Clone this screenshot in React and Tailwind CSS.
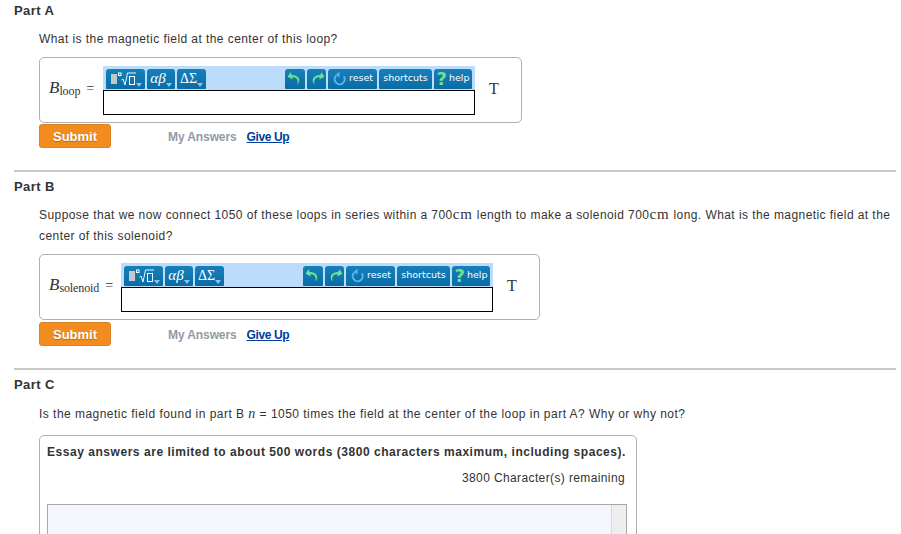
const btn =
    "flex items-center justify-center h-5 rounded-t-[3px] rounded-b-[1px] bg-gradient-to-b from-[#1580bb] to-[#0a6ca5] text-white";
const toolText = "font-['DejaVu_Sans',sans-serif] text-[9.5px] tracking-normal";

function Caret() {
    return (
        <svg width="6" height="4" viewBox="0 0 6 4" className="absolute right-[3px] bottom-[2px]">
            <path d="M0 0h6L3 4z" fill="#8fc4ea" />
        </svg>
    );
}

function Toolbar() {
    return (
        <div className="flex flex-col w-[372px]">
            <div className="flex justify-between h-[24px] pt-[3px] pl-[3px] pr-[3px] bg-[#bbdcfb]">
                <div className="flex gap-[2px]">
                    <div className={`${btn} relative w-[39px] !justify-start pl-[5px] gap-[1px]`}>
                        <span className="w-[6px] h-[10px] bg-[#c4c8cc]" />
                        <svg width="20" height="14" viewBox="0 0 20 14">
                            <rect x="0.5" y="1" width="2.5" height="2.5" fill="none" stroke="#fff" strokeWidth="1" />
                            <path d="M3.5 8l1.5-1 2 6 2.5-12H18" fill="none" stroke="#dff" strokeWidth="1" />
                            <rect x="11.5" y="4.5" width="5" height="8" fill="none" stroke="#fff" strokeWidth="1" />
                        </svg>
                        <Caret />
                    </div>
                    <div className={`${btn} relative w-[28px] pr-[6px] font-['Liberation_Serif',serif] italic text-[15px] tracking-normal text-[#d5e8f5]`}>
                        αβ
                        <Caret />
                    </div>
                    <div className={`${btn} relative w-[29px] pr-[6px] font-['Liberation_Serif',serif] text-[14px] tracking-normal text-[#c5dff0]`}>
                        ΔΣ
                        <Caret />
                    </div>
                </div>
                <div className="flex gap-[2px]">
                    <div className={`${btn} w-[20px]`}>
                        <svg width="16" height="16" viewBox="0 0 14 14">
                            <path d="M3 1L0.5 5 5 7.5 4.6 5.4c3.4-.2 5.4 1.5 4.6 6.6 3-4.4 1.6-8.4-5-8.6z" fill="#6ee08f" />
                        </svg>
                    </div>
                    <div className={`${btn} w-[19px]`}>
                        <svg width="16" height="16" viewBox="0 0 14 14">
                            <path d="M11 1l2.5 4L9 7.5l.4-2.1c-3.4-.2-5.4 1.5-4.6 6.6-3-4.4-1.6-8.4 5-8.6z" fill="#6ee08f" />
                        </svg>
                    </div>
                    <div className={`${btn} ${toolText} w-[49px] gap-[3px]`}>
                        <svg width="14" height="15" viewBox="0 0 14 15">
                            <path d="M4.2 4.6A5 5 0 1 0 11.8 5.4" fill="none" stroke="#58b4ee" strokeWidth="2" />
                            <path d="M7.5 0.5v6l-4-2.5z" fill="#58b4ee" />
                        </svg>
                        reset
                    </div>
                    <div className={`${btn} ${toolText} w-[53px]`}>shortcuts</div>
                    <div className={`${btn} ${toolText} w-[38px] gap-[2px]`}>
                        <span className="text-[18px] leading-none font-bold text-[#6ee08f]">?</span>
                        help
                    </div>
                </div>
            </div>
            <div className="h-[25px] border border-black bg-white" />
        </div>
    );
}

function SubmitRow() {
    return (
        <div className="flex items-center">
            <button className="w-[72px] h-[24px] rounded-[3px] border border-[#d9822b] bg-[#f28c1e] text-white font-bold text-[13px] leading-none tracking-normal [text-shadow:0_1px_1px_#b86a10]">
                Submit
            </button>
            <span className="ml-[57px] pt-[1px] font-bold tracking-[-0.1px] text-[#8f9aa6]">My Answers</span>
            <span className="ml-[10px] pt-[1px] font-bold tracking-[-0.4px] text-[#003c9e] underline">Give Up</span>
        </div>
    );
}

function AnswerBox({ width, sub, labelWidth, mt }) {
    return (
        <div
            className={`flex items-center rounded-[5px] border border-[#b0b0b0] h-[66px] pl-[9px] ${mt}`}
            style={{ width }}
        >
            <div
                className="flex items-center shrink-0 -mt-[4px] font-['Liberation_Serif',serif] tracking-normal text-[#333]"
                style={{ width: labelWidth }}
            >
                <span className="italic text-[17px]">B</span>
                <span className="text-[12px] mt-[6px] tracking-[-0.1px]">{sub}</span>
                <span className="ml-[6px] text-[14px]">=</span>
            </div>
            <Toolbar />
            <span className="ml-[14px] -mt-[2px] font-['Liberation_Serif',serif] text-[16px] tracking-normal text-[#333]">T</span>
        </div>
    );
}

function PartHeading({ children }) {
    return <h2 className="ml-[14px] font-bold text-[13px] leading-[16px] text-[#333]">{children}</h2>;
}

function Divider() {
    return <div className="ml-[14px] w-[882px] h-[2px] bg-[#c8c8c8]" />;
}

function Unit() {
    return <span className="font-['Liberation_Serif',serif] text-[15px] leading-none tracking-[1px]">cm</span>;
}

export default function App() {
    return (
        <div className="w-[901px] h-[534px] overflow-hidden bg-white font-['Liberation_Sans',sans-serif] text-[12px] tracking-[0.43px] text-[#333]">
            <div className="pt-[3px]">
                <PartHeading>Part A</PartHeading>
            </div>
            <div className="ml-[39px]">
                <p className="mt-[11px] leading-[18px]">What is the magnetic field at the center of this loop?</p>
                <AnswerBox width="483px" sub="loop" labelWidth="54px" mt="mt-[9px]" />
                <div className="mt-[1px]">
                    <SubmitRow />
                </div>
            </div>
            <div className="mt-[22px]">
                <Divider />
            </div>
            <div className="mt-[7px]">
                <PartHeading>Part B</PartHeading>
            </div>
            <div className="ml-[39px]">
                <p className="mt-[10px] w-[856px] leading-[21px]">
                    Suppose that we now connect 1050 of these loops in series within a 700
                    <Unit /> length to make a solenoid 700
                    <Unit /> long. What is the magnetic field at the center of this solenoid?
                </p>
                <AnswerBox width="501px" sub="solenoid" labelWidth="72px" mt="mt-[7px]" />
                <div className="mt-[2px]">
                    <SubmitRow />
                </div>
            </div>
            <div className="mt-[22px]">
                <Divider />
            </div>
            <div className="mt-[7px]">
                <PartHeading>Part C</PartHeading>
            </div>
            <div className="ml-[39px]">
                <p className="mt-[12px] leading-[18px] tracking-[0.47px]">
                    Is the magnetic field found in part B <span className="font-['Liberation_Serif',serif] italic text-[14px] leading-none">n</span> = 1050 times the field at the center of the loop in part A? Why or why not?
                </p>
                <div className="mt-[12px] w-[598px] h-[200px] rounded-t-[5px] border border-[#b0b0b0] pl-[7px] pr-[9px] pt-[7px]">
                    <p className="font-bold leading-[18px] tracking-[0.54px] whitespace-nowrap">Essay answers are limited to about 500 words (3800 characters maximum, including spaces).</p>
                    <p className="mt-[8px] pr-[2px] text-right leading-[18px] tracking-[0.38px]">3800 Character(s) remaining</p>
                    <div className="mt-[17px] flex h-[80px] border border-[#a8a8a8] bg-[#f3f7fd]">
                        <div className="ml-auto w-[15px] border-l border-[#d8d8d8] bg-[#eeeeee]" />
                    </div>
                </div>
            </div>
        </div>
    );
}
